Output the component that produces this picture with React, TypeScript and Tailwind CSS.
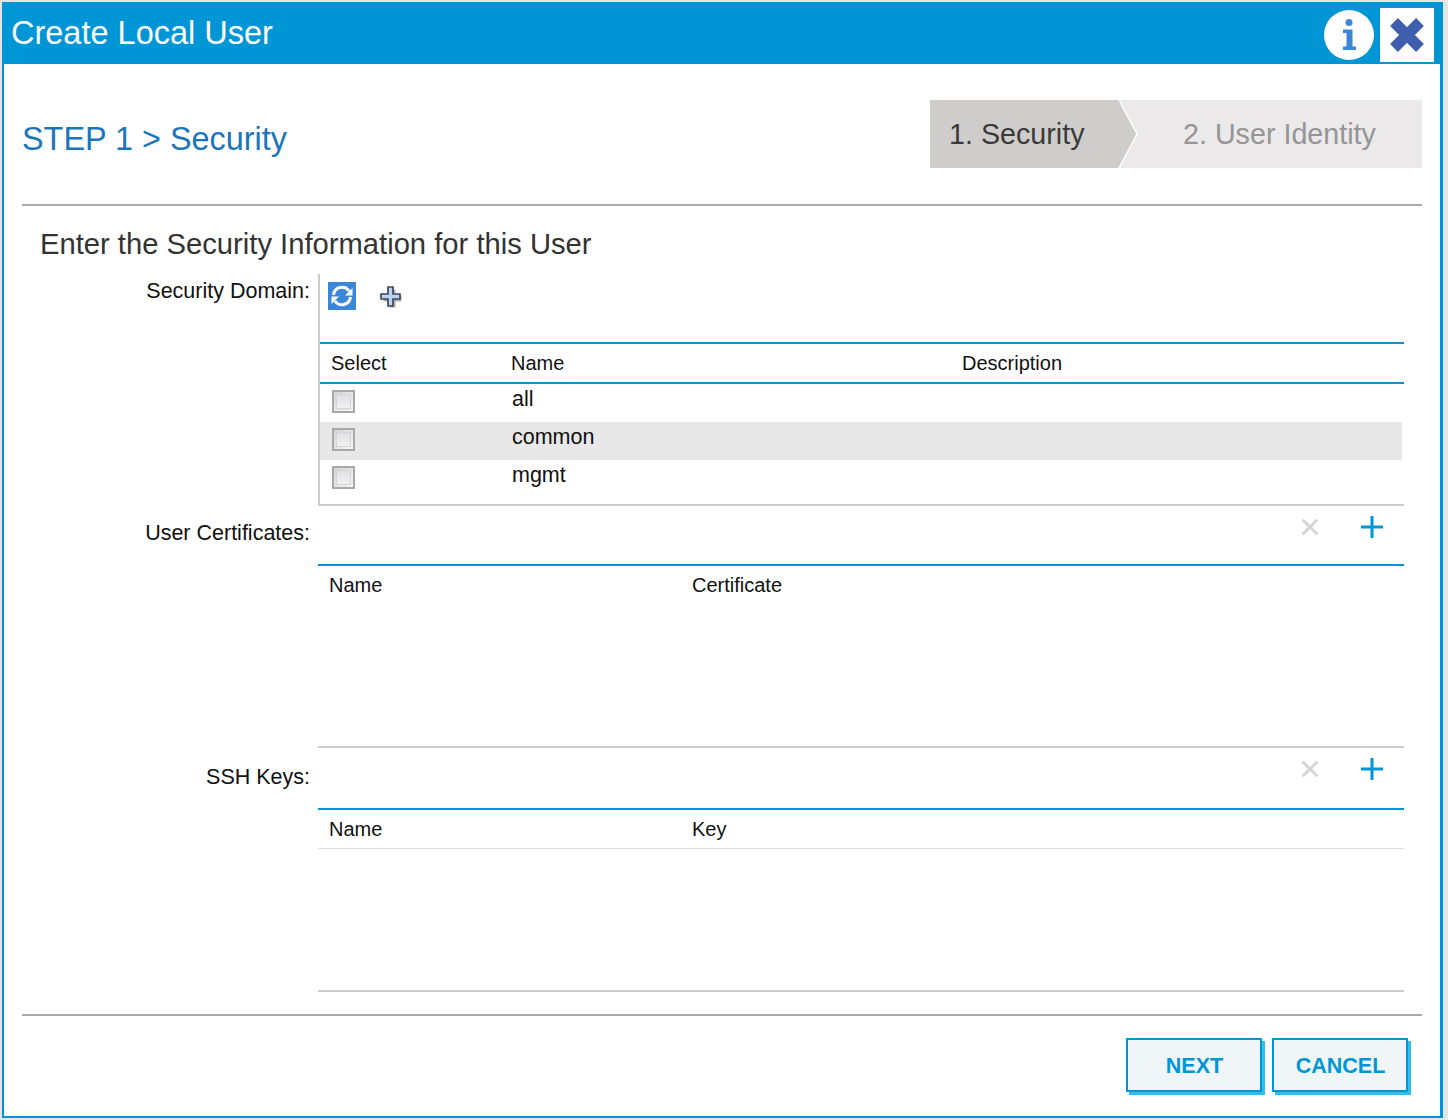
import type { ReactNode } from "react";

const DOMAINS = ["all", "common", "mgmt"];

function InfoIcon() {
  return (
    <svg width="50" height="50" viewBox="0 0 50 50">
      <circle cx="25" cy="25" r="25" fill="#fff" />
      <circle cx="25" cy="12.5" r="3.5" fill="#3a87d8" />
      <path d="M19 19.500h9.500v17H32V40H19v-3.500h3.500V23H19z" fill="#3a87d8" />
    </svg>
  );
}

function CloseIcon() {
  return (
    <svg width="38" height="38" viewBox="0 0 38 38">
      <path d="M6 6l26 26M32 6L6 32" stroke="#3f5fae" strokeWidth="11" fill="none" />
    </svg>
  );
}

function RefreshIcon() {
  return (
    <div className="flex h-7 w-7 items-center justify-center bg-[#3a87d8]">
      <svg width="26" height="26" viewBox="0 0 26 26" fill="none">
        <path d="M4.500 12A8.500 8.500 0 0 1 20 8" stroke="#fff" strokeWidth="3" />
        <path d="M23.500 5v7.500H16z" fill="#fff" />
        <path d="M21.500 14A8.500 8.500 0 0 1 6 18" stroke="#fff" strokeWidth="3" />
        <path d="M2.500 21v-7.500H10z" fill="#fff" />
      </svg>
    </div>
  );
}

function AddDomainIcon() {
  return (
    <svg width="26" height="26" viewBox="0 0 26 26">
      <path d="M10 4h6v6h6v6h-6v6h-6v-6H4v-6h6z" fill="#b0b0b0" transform="translate(1.500 1.500)" />
      <path d="M10 3h5v7h7v5h-7v7h-5v-7H3v-5h7z" fill="#bcd2f8" stroke="#3f4854" strokeWidth="1.700" />
    </svg>
  );
}

function TableActions({ height }: { height: string }) {
  return (
    <div className={`flex items-start justify-end pr-[21px] pt-[10px] ${height}`}>
      <svg width="20" height="20" viewBox="0 0 20 20" className="mr-[41px] mt-[1px]">
        <path d="M2.500 2.500l15 15M17.500 2.500l-15 15" stroke="#d6d6d6" strokeWidth="3" fill="none" />
      </svg>
      <svg width="22" height="22" viewBox="0 0 22 22">
        <path d="M11 0v22M0 11h22" stroke="#0096d6" strokeWidth="3" fill="none" />
      </svg>
    </div>
  );
}

function Checkbox() {
  return (
    <div className="h-[23px] w-[23px] border-2 border-[#a8a8a8] bg-gradient-to-br from-[#d4d4d4] to-[#f6f6f6] p-[2px]">
      <div className="h-full w-full border border-[#d4d4d4] bg-gradient-to-b from-[#dfdfe6] to-[#f2f2f2]" />
    </div>
  );
}

function FormRow({ label, labelTop, children }: { label: string; labelTop: string; children: ReactNode }) {
  return (
    <div className="flex">
      <div className={`w-[306px] text-right text-[21.500px] leading-[26px] text-[#111] ${labelTop}`}>{label}</div>
      <div className="ml-[8px] w-[1086px]">{children}</div>
    </div>
  );
}

function ActionButton({ label }: { label: string }) {
  return (
    <button className="h-[54px] w-[136px] border-2 border-[#0096d6] bg-[#f0f5f8] pl-[1px] pt-[2px] text-[21.500px] font-bold text-[#0096d6] shadow-[3px_3px_0_#2fbfee]">
      {label}
    </button>
  );
}

export default function App() {
  return (
    <div className="h-[1120px] w-[1448px] overflow-hidden bg-[#e5e5e5] pl-[2px] pt-[2px] font-['Liberation_Sans',Arial,sans-serif]">
      <div className="h-[1116px] w-[1441px] border-b-2 border-l-2 border-r-[3px] border-[#0096d6] bg-white">
        {/* Title bar */}
        <div className="relative -ml-[2px] -mr-[3px] flex h-[62px] items-center justify-between bg-[#0096d6] pl-[9px] pr-[9px]">
          <span className="text-[32.500px] leading-[62px] text-white">Create Local User</span>
          <div className="flex items-start self-start pt-[6px]">
            <div className="mr-[6px] mt-[2px]">
              <InfoIcon />
            </div>
            <div className="flex h-[54px] w-[54px] items-center justify-center bg-white">
              <CloseIcon />
            </div>
          </div>
        </div>

        <div className="pl-[18px] pr-[18px]">
          {/* Step header */}
          <div className="flex h-[142px] justify-between border-b-2 border-[#a9a9ad]">
            <h1 className="pt-[53px] text-[32.400px] leading-[44px] text-[#1b75bb]">STEP 1 &gt; Security</h1>
            <div className="relative mt-[36px] flex h-[68px] w-[492px] bg-[#ebe9ea] text-[28.700px] leading-[68px]">
              <div className="w-[190px] bg-[#cfcdcb] pl-[19px] text-[#3a3a3a]">1. Security</div>
              <svg width="20" height="68" viewBox="0 0 20 68" className="absolute left-[188px] top-0">
                <path d="M1 0l18 34L1 68H0V0z" fill="#cfcdcb" />
                <path d="M1 0l18 34L1 68" stroke="#fff" strokeWidth="1.500" fill="none" />
              </svg>
              <div className="pl-[63px] text-[#959595]">2. User Identity</div>
            </div>
          </div>

          <h2 className="ml-[18px] h-[68px] pt-[21px] text-[29.200px] leading-[35px] text-[#333]">
            Enter the Security Information for this User
          </h2>
        </div>

        {/* Security Domain */}
        <FormRow label="Security Domain:" labelTop="pt-[4px]">
          <div className="h-[232px] border-b-2 border-l-2 border-[#cccccc]">
            <div className="flex h-[68px] items-start pl-[8px] pt-[8px]">
              <RefreshIcon />
              <div className="ml-[22px] mt-[2px]">
                <AddDomainIcon />
              </div>
            </div>
            <div className="flex h-[42px] items-center border-y-2 border-[#0096d6] text-[20px] text-[#111]">
              <span className="w-[191px] pl-[11px]">Select</span>
              <span className="w-[451px]">Name</span>
              <span>Description</span>
            </div>
            {DOMAINS.map((name, i) => (
              <div key={name} className={`mr-[2px] flex h-[38px] ${i === 1 ? "bg-[#e8e8e8]" : ""}`}>
                <div className="w-[192px] pl-[12px] pt-[6px]">
                  <Checkbox />
                </div>
                <span className="text-[21.500px] leading-[30px] text-[#111]">{name}</span>
              </div>
            ))}
          </div>
        </FormRow>

        {/* User Certificates */}
        <FormRow label="User Certificates:" labelTop="pt-[14px]">
          <TableActions height="h-[58px]" />
          <div className="h-[184px] border-y-2 border-b-[#cccccc] border-t-[#0096d6]">
            <div className="flex h-[38px] items-center text-[20px] text-[#111]">
              <span className="w-[374px] pl-[11px]">Name</span>
              <span>Certificate</span>
            </div>
          </div>
        </FormRow>

        {/* SSH Keys */}
        <FormRow label="SSH Keys:" labelTop="pt-[16px]">
          <TableActions height="h-[60px]" />
          <div className="h-[184px] border-y-2 border-b-[#cccccc] border-t-[#0096d6]">
            <div className="flex h-[39px] items-center border-b border-[#dddddd] text-[20px] text-[#111]">
              <span className="w-[374px] pl-[11px]">Name</span>
              <span>Key</span>
            </div>
          </div>
        </FormRow>

        {/* Footer */}
        <div className="mx-[18px] mt-[22px] flex justify-end gap-[10px] border-t-2 border-[#a9a9ad] pr-[14px] pt-[22px]">
          <ActionButton label="NEXT" />
          <ActionButton label="CANCEL" />
        </div>
      </div>
    </div>
  );
}
